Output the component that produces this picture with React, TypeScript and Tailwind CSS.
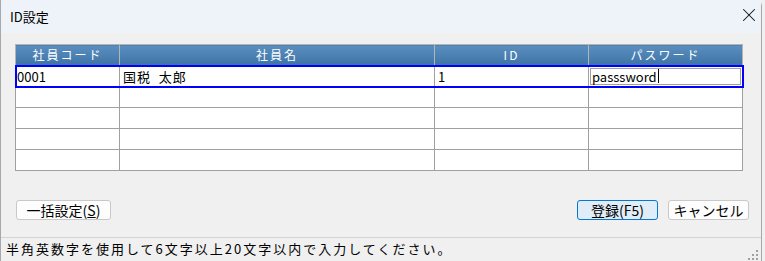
import { X } from 'lucide-react';

const cols = [
  { label: '社員コード', w: 'w-[104px]' },
  { label: '社員名', w: 'w-[315px]' },
  { label: 'ID', w: 'w-[154px]' },
  { label: 'パスワード', w: 'w-[154px]' },
];

const emptyRows = [1, 2, 3, 4];

export default function App() {
  return (
    <div className="w-[765px] h-[261px] overflow-hidden bg-[#f0f0f0] text-black" style={{ fontFamily: '"Noto Sans CJK JP", sans-serif' }}>
      <div className="w-[762px] h-[261px] flex flex-col border-l border-r border-[#a8a8a8] rounded-tr-[6px] bg-[#f0f0f0]">
        {/* title bar */}
        <div className="h-[33px] shrink-0 flex items-center justify-between bg-[#eef3f9] pl-[9px] pr-[1px]">
          <span className="text-[13px] leading-none">ID設定</span>
          <X className="w-[22px] h-[22px] -mt-[3px] text-[#111]" strokeWidth={1.1} />
        </div>

        {/* body */}
        <div className="flex-1 flex flex-col pt-[11px] pl-[14px]">
          <table className="border-collapse text-[13px] leading-none table-fixed w-[727px]">
            <thead>
              <tr className="h-[21px]">
                {cols.map((c) => (
                  <th
                    key={c.label}
                    className={`${c.w} border border-[#b4b4b4] bg-gradient-to-b from-[#5b8fc0] to-[#3e73a6] text-white text-[12px] font-normal tracking-[2px] p-0`}
                  >
                    {c.label}
                  </th>
                ))}
              </tr>
            </thead>
            <tbody>
              <tr className="h-[21px] bg-white outline-2 outline-[#0000ff] -outline-offset-1">
                <td className="border border-[#a0a0a0] px-[1px] p-0">0001</td>
                <td className="border border-[#a0a0a0] px-[3px] p-0 tracking-[1px]">国税&nbsp;&nbsp;太郎</td>
                <td className="border border-[#a0a0a0] px-[3px] p-0">1</td>
                <td className="border border-[#a0a0a0] p-0">
                  <div className="h-[17px] mx-[1px] border border-[#a0a0a0] flex items-center px-[1px]">
                    passsword<span className="inline-block w-[1px] h-[14px] bg-black ml-[1px]" />
                  </div>
                </td>
              </tr>
              {emptyRows.map((r) => (
                <tr key={r} className="h-[21px] bg-white">
                  {cols.map((c) => (
                    <td key={c.label} className="border border-[#a0a0a0] p-0" />
                  ))}
                </tr>
              ))}
            </tbody>
          </table>

          <div className="flex items-center justify-between mt-[29px] w-[734px] pl-[1px]">
            <button className="w-[95px] h-[20px] rounded-[3px] border border-[#c8c8c8] bg-[#fdfdfd] text-[14px] leading-none">
              一括設定(<span className="underline">S</span>)
            </button>
            <div className="flex gap-[10px]">
              <button className="w-[81px] h-[20px] rounded-[3px] border border-[#0078d4] bg-[#e0ecf8] text-[14px] leading-none">
                登録(F5)
              </button>
              <button className="w-[81px] h-[20px] rounded-[3px] border border-[#c8c8c8] bg-[#fdfdfd] text-[14px] leading-none">
                キャンセル
              </button>
            </div>
          </div>
        </div>

        {/* status bar */}
        <div className="h-[24px] shrink-0 border-t border-[#d4d4d4] flex items-start justify-between pt-[4px] pl-[5px] pr-[3px]">
          <span className="text-[13px] leading-none tracking-[2px]">半角英数字を使用して6文字以上20文字以内で入力してください。</span>
          <svg width="10" height="10" viewBox="0 0 10 10" className="mt-[8px]">
            <rect x="8" y="0" width="2" height="2" fill="#a0a0a0" />
            <rect x="4" y="4" width="2" height="2" fill="#a0a0a0" />
            <rect x="8" y="4" width="2" height="2" fill="#a0a0a0" />
            <rect x="0" y="8" width="2" height="2" fill="#a0a0a0" />
            <rect x="4" y="8" width="2" height="2" fill="#a0a0a0" />
            <rect x="8" y="8" width="2" height="2" fill="#a0a0a0" />
          </svg>
        </div>
      </div>
    </div>
  );
}
